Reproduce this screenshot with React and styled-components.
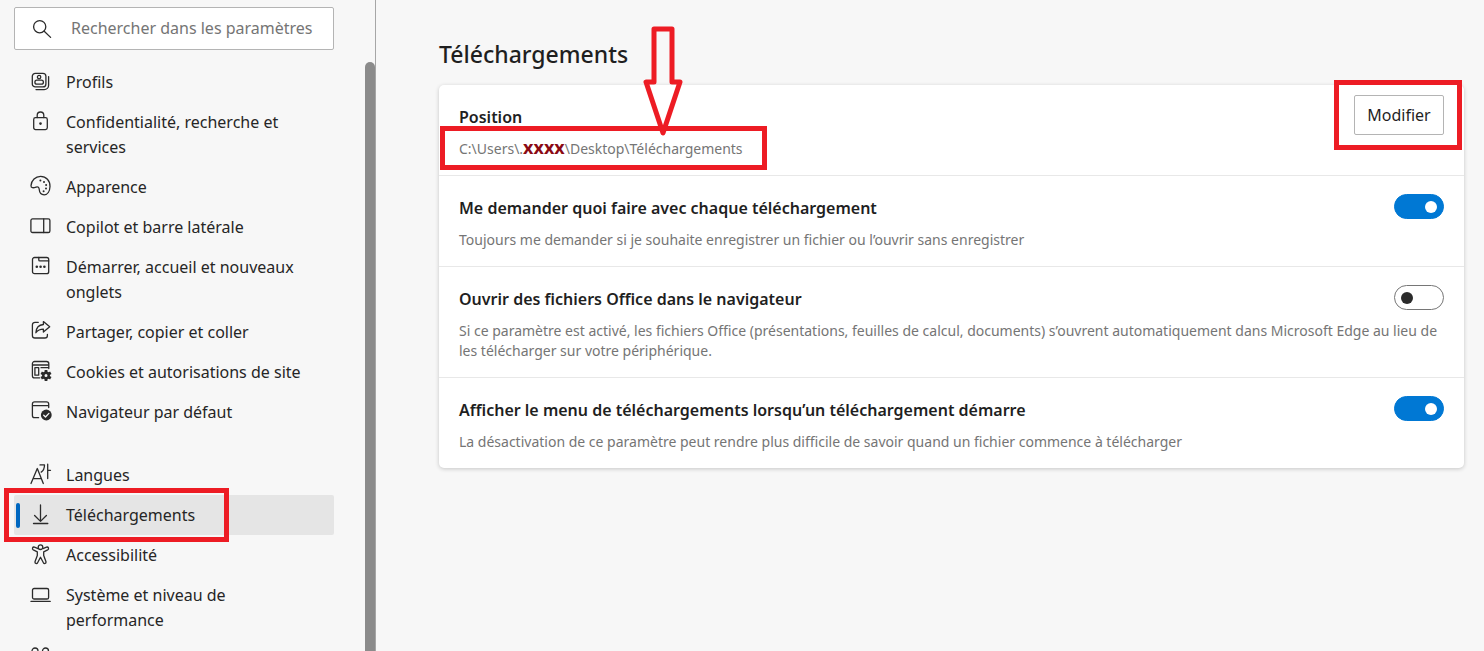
import React, { useState } from "react";
import styled, { createGlobalStyle, css } from "styled-components";

const GlobalStyle = createGlobalStyle`
  * {
    box-sizing: border-box;
  }

  body {
    margin: 0;
    background: #f7f7f7;
    color: #1f1f1f;
    font-family: "Noto Sans", "Open Sans", sans-serif;
    font-size: 16px;
    line-height: 25px;
  }

  input,
  button {
    font: inherit;
    color: inherit;
  }
`;

const Page = styled.div`
  display: flex;
  height: 100vh;
  overflow: hidden;
`;

const Sidebar = styled.aside`
  flex: 0 0 376px;
  display: flex;
  flex-direction: column;
  border-right: 1px solid #a6a6a6;
`;

const SearchBox = styled.label`
  display: flex;
  align-items: center;
  flex-shrink: 0;
  gap: 19px;
  height: 43px;
  margin: 7px 41px 12px 14px;
  padding: 0 10px 0 17px;
  background: #fff;
  border: 1px solid #b4b4b4;
  border-radius: 2px;
`;

const SearchInput = styled.input`
  flex: 1;
  min-width: 0;
  padding: 0;
  border: none;
  outline: none;
  background: transparent;

  &::placeholder {
    color: #757575;
    opacity: 1;
  }
`;

const NavArea = styled.div`
  display: flex;
  flex: 1;
  min-height: 0;
  overflow: hidden;
`;

const NavList = styled.nav`
  flex: 1;
  padding: 0 31px 0 14px;
`;

const ScrollThumb = styled.div`
  width: 10px;
  background: #8b8b8b;
  border-radius: 5px 5px 0 0;
`;

const NavLink = styled.a`
  position: relative;
  display: flex;
  gap: 16px;
  min-height: 40px;
  margin-top: ${(props) => (props.$spaced ? "23px" : "0")};
  padding: 8px 20px 7px 16px;
  border-radius: 2px;
  color: #262626;
  text-decoration: none;

  ${(props) =>
    props.$active &&
    css`
      background: #e5e5e5;

      &::before {
        content: "";
        position: absolute;
        left: 2px;
        top: 8px;
        width: 4px;
        height: 25px;
        border-radius: 2px;
        background: #0067c0;
      }
    `}
`;

const IconSvg = styled.svg`
  flex: 0 0 20px;
  height: 20px;
  margin-top: 1px;
  overflow: visible;
  fill: none;
  stroke: #2b2b2b;
  stroke-width: 1.3;
  stroke-linecap: round;
  stroke-linejoin: round;

  .solid {
    fill: #2b2b2b;
    stroke: none;
  }
`;

const Main = styled.main`
  flex: 1;
  min-width: 0;
  padding: 38px 20px 20px 63px;
`;

const PageTitle = styled.h1`
  margin: 0 0 15px;
  font-size: 23px;
  line-height: 32px;
  font-weight: 500;
`;

const Card = styled.section`
  background: #fff;
  border-radius: 5px;
  box-shadow: 0 1px 4px rgba(0, 0, 0, 0.2);
`;

const Row = styled.div`
  padding: 10px 20px 16px;

  & + & {
    border-top: 1px solid #e8e8e8;
  }
`;

const RowHead = styled.div`
  display: flex;
  align-items: flex-start;
  justify-content: space-between;
  min-height: 44px;
`;

const RowTitle = styled.label`
  padding-top: 10px;
  font-size: 16px;
  font-weight: 600;
`;

const RowText = styled.p`
  margin: 0;
  font-size: 14px;
  line-height: 20px;
  color: #757575;
`;

const Toggle = styled.input`
  appearance: none;
  display: flex;
  align-items: center;
  justify-content: ${(props) => (props.checked ? "flex-end" : "flex-start")};
  flex-shrink: 0;
  width: 50px;
  height: 25px;
  margin: 8px 0 0;
  padding: 0 6px;
  border: 1px solid ${(props) => (props.checked ? "#0078d4" : "#767676")};
  border-radius: 13px;
  background: ${(props) => (props.checked ? "#0078d4" : "#fff")};
  cursor: pointer;

  &::before {
    content: "";
    width: 12px;
    height: 12px;
    border-radius: 50%;
    background: ${(props) => (props.checked ? "#fff" : "#2b2b2b")};
  }
`;

const ButtonWrap = styled.div`
  position: relative;
`;

const Button = styled.button`
  width: 90px;
  height: 40px;
  padding: 0;
  border: 1px solid #b4b4b4;
  border-radius: 2px;
  background: #fff;
  cursor: pointer;
`;

const PathText = styled.span`
  position: relative;
  display: block;
  width: fit-content;
`;

const Masked = styled.strong`
  font-size: 18px;
  line-height: 0;
  font-weight: 700;
  color: #8b0a14;
`;

const Frame = styled.span`
  position: absolute;
  inset: ${(props) => props.$inset};
  border: 5px solid #ed1c24;
  pointer-events: none;
`;

const Arrow = styled.svg`
  position: absolute;
  left: 184px;
  top: -113px;
  width: 40px;
  height: 110px;
  fill: none;
  stroke: #ed1c24;
  stroke-width: 5;
  stroke-linejoin: round;
  pointer-events: none;
`;

const icons = {
  profile: (
    <>
      <rect x="2.3" y="2.3" width="13.6" height="13.6" rx="3" />
      <path d="M18.6 5.6v8.6a4.4 4.4 0 0 1-4.4 4.4H6" />
      <circle cx="9.1" cy="6.1" r="1.7" />
      <rect x="4.9" y="9.2" width="8.5" height="4" rx="2" />
    </>
  ),
  lock: (
    <>
      <rect x="3.7" y="6.6" width="13.6" height="12" rx="1.8" />
      <path d="M7.2 6.6V4.3a3.3 3.3 0 0 1 6.6 0v2.3" />
      <circle className="solid" cx="10.5" cy="12.6" r="1.3" />
    </>
  ),
  palette: (
    <>
      <path d="M1 9.6C1.3 4.4 5.5.3 10.6.3c5.5 0 9.6 4.4 9.4 10.2-.2 4.7-2.4 8.3-5.8 8.3-3.3 0-4.7-2.3-4.9-5-.2-2.5-1.2-3.3-3.2-2.7-2.6.9-5.3 1.2-5.1-1.5z" />
      <circle className="solid" cx="10.4" cy="4.5" r="1" />
      <circle className="solid" cx="14" cy="6" r="1" />
      <circle className="solid" cx="16.1" cy="9" r="1" />
      <circle className="solid" cx="16" cy="12.6" r="1" />
      <circle className="solid" cx="13.6" cy="15.2" r="1" />
    </>
  ),
  panel: (
    <>
      <rect x="0.9" y="2.9" width="19" height="13.6" rx="1.6" />
      <path d="M13.7 2.9v13.6" />
    </>
  ),
  start: (
    <>
      <rect x="2.5" y="1.5" width="16.2" height="16.2" rx="2" />
      <path d="M8.8 1.5v2.4c0 .6.4 1 1 1h8.9" />
      <circle className="solid" cx="6.8" cy="10.8" r="1.3" />
      <circle className="solid" cx="10.6" cy="10.8" r="1.3" />
      <circle className="solid" cx="14.4" cy="10.8" r="1.3" />
    </>
  ),
  share: (
    <>
      <path d="M8.3 1.3H5a2.6 2.6 0 0 0-2.6 2.6v10.5A2.6 2.6 0 0 0 5 17h9.8a2.6 2.6 0 0 0 2.6-2.6v-1" />
      <path d="M13.4.6l6.3 5.2-6.3 5.2V8.2c-3.3 0-5.5 1-7.5 3.5.3-4.7 3-7.9 7.5-8.2z" />
    </>
  ),
  cookies: (
    <>
      <path d="M18.8 7.5V2.7A2.2 2.2 0 0 0 16.6.5H4.6a2.2 2.2 0 0 0-2.2 2.2v12a2.2 2.2 0 0 0 2.2 2.2h5M2.4 4h16.4M11 6.7h7" />
      <rect x="4.9" y="6.7" width="3.8" height="7.5" />
      <path d="M16 9v11M11.2 11.8l9.6 5.5M20.8 11.8l-9.6 5.5" strokeWidth="2.8" strokeLinecap="butt" />
      <circle cx="16" cy="14.5" r="2.7" strokeWidth="2.4" fill="#f7f7f7" />
    </>
  ),
  browser: (
    <>
      <path d="M18.7 6.5V3A2.2 2.2 0 0 0 16.5.9H4.6A2.2 2.2 0 0 0 2.4 3v11.5a2.2 2.2 0 0 0 2.2 2.2h4M2.4 4.6h16.3" />
      <circle className="solid" cx="16.3" cy="14" r="5.4" />
      <path d="M13.7 14.2l1.8 1.8 3.4-3.6" stroke="#f7f7f7" />
    </>
  ),
  language: (
    <>
      <path d="M1 19.5L7.3 4.5l6 15M3.1 14.7h8.3" />
      <path d="M10 .9h4.5c0 3.4-1.2 5.7-3.3 7.2M17.7.2v14.3M17.7 6.3h2.8" />
    </>
  ),
  download: <path d="M10.5 1v16.3M4.6 11.5l5.9 5.9 5.9-5.9M3.5 19.5h14.3" />,
  accessibility: (
    <>
      <circle cx="10.5" cy="3.2" r="2.3" />
      <path d="M8 4.6L4.5 3.1C2.5 2.6 1.7 5 3.3 5.9l4 1.9v3.7l-2.3 6.3c-.4 1.7 1.9 2.4 2.6.9l2.9-5.5 2.9 5.5c.7 1.5 3 .8 2.6-.9l-2.3-6.3V7.8l4-1.9c1.6-.9.8-3.3-1.2-2.8L13 4.6" />
    </>
  ),
  laptop: (
    <>
      <rect x="2.5" y="4.5" width="16.1" height="10.5" rx="1.6" />
      <path d="M1 17.4h19.2" />
    </>
  ),
  more: (
    <>
      <circle cx="5" cy="2" r="3" />
      <circle cx="15.5" cy="2" r="3" />
    </>
  ),
};

const Icon = ({ name }) => (
  <IconSvg viewBox="0 0 20 20" aria-hidden="true">
    {icons[name]}
  </IconSvg>
);

const navItems = [
  { icon: "profile", text: "Profils" },
  { icon: "lock", text: "Confidentialité, recherche et services" },
  { icon: "palette", text: "Apparence" },
  { icon: "panel", text: "Copilot et barre latérale" },
  { icon: "start", text: "Démarrer, accueil et nouveaux onglets" },
  { icon: "share", text: "Partager, copier et coller" },
  { icon: "cookies", text: "Cookies et autorisations de site" },
  { icon: "browser", text: "Navigateur par défaut" },
  { icon: "language", text: "Langues", spaced: true },
  { icon: "download", text: "Téléchargements", active: true },
  { icon: "accessibility", text: "Accessibilité" },
  { icon: "laptop", text: "Système et niveau de performance" },
  { icon: "more" },
];

const settings = [
  {
    id: "ask",
    title: "Me demander quoi faire avec chaque téléchargement",
    text: "Toujours me demander si je souhaite enregistrer un fichier ou l’ouvrir sans enregistrer",
  },
  {
    id: "office",
    title: "Ouvrir des fichiers Office dans le navigateur",
    text: "Si ce paramètre est activé, les fichiers Office (présentations, feuilles de calcul, documents) s’ouvrent automatiquement dans Microsoft Edge au lieu de les télécharger sur votre périphérique.",
  },
  {
    id: "menu",
    title: "Afficher le menu de téléchargements lorsqu’un téléchargement démarre",
    text: "La désactivation de ce paramètre peut rendre plus difficile de savoir quand un fichier commence à télécharger",
  },
];

const App = () => {
  const [enabled, setEnabled] = useState({ ask: true, office: false, menu: true });

  const toggle = (id) => setEnabled({ ...enabled, [id]: !enabled[id] });

  return (
    <>
      <GlobalStyle />
      <Page>
        <Sidebar>
          <SearchBox>
            <IconSvg viewBox="0 0 20 20" aria-hidden="true">
              <circle cx="7.7" cy="7.7" r="6.1" />
              <path d="M12.2 12.2l6.4 6.2" />
            </IconSvg>
            <SearchInput
              type="text"
              aria-label="Rechercher dans les paramètres"
              placeholder="Rechercher dans les paramètres"
            />
          </SearchBox>
          <NavArea>
            <NavList>
              {navItems.map((item) => (
                <NavLink
                  key={item.icon}
                  href="#"
                  $active={item.active}
                  $spaced={item.spaced}
                >
                  <Icon name={item.icon} />
                  {item.text && <span>{item.text}</span>}
                  {item.active && <Frame $inset="-7px 105px -7px -10px" />}
                </NavLink>
              ))}
            </NavList>
            <ScrollThumb />
          </NavArea>
        </Sidebar>
        <Main>
          <PageTitle>Téléchargements</PageTitle>
          <Card>
            <Row>
              <RowHead>
                <RowTitle htmlFor="change">Position</RowTitle>
                <ButtonWrap>
                  <Button id="change" type="button">
                    Modifier
                  </Button>
                  <Frame $inset="-15px -18px -15px -20px" />
                </ButtonWrap>
              </RowHead>
              <RowText as="div">
                <PathText>
                  C:\Users\.<Masked>xxxx</Masked>\Desktop\Téléchargements
                  <Frame $inset="-13px -24px -11px -19px" />
                  <Arrow viewBox="0 0 40 110" aria-hidden="true">
                    <path d="M11 3h18v53h8L20 107 3 56h8z" />
                  </Arrow>
                </PathText>
              </RowText>
            </Row>
            {settings.map((item) => (
              <Row key={item.id}>
                <RowHead>
                  <RowTitle htmlFor={item.id}>{item.title}</RowTitle>
                  <Toggle
                    id={item.id}
                    type="checkbox"
                    checked={enabled[item.id]}
                    onChange={() => toggle(item.id)}
                  />
                </RowHead>
                <RowText>{item.text}</RowText>
              </Row>
            ))}
          </Card>
        </Main>
      </Page>
    </>
  );
};

export default App;
